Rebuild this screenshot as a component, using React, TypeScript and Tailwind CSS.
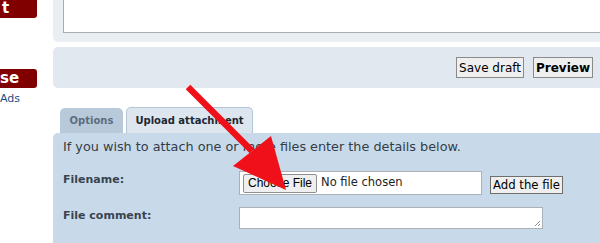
import React from "react";

const V = { fontFamily: '"DejaVu Sans", Verdana, sans-serif' };
const A = { fontFamily: '"Liberation Sans", Arial, sans-serif' };

export default function App() {
  return (
    <div className="relative w-[600px] h-[243px] overflow-hidden bg-white flex" style={V}>
      {/* sidebar */}
      <div className="w-[53px] shrink-0 flex flex-col">
        <div className="w-[37px] h-[18px] bg-[#800000] rounded-br-[3px] text-white font-bold text-[15px] leading-[16px] pl-[2px]">t</div>
        <div className="h-[51px]" />
        <div className="w-[37px] h-[19px] bg-[#800000] rounded-r-[3px] text-white font-bold text-[15px] leading-[18px]">se</div>
        <div className="text-[11px] leading-[14px] text-[#1b4e80] mt-[4px]">Ads</div>
      </div>
      {/* main */}
      <div className="flex-1 flex flex-col">
        <div className="h-[42px] bg-[#e9eef3] rounded-bl-[5px] pl-[10px]">
          <div className="h-[33px] bg-white border-l border-b border-[#a5acb2]" />
        </div>
        <div className="h-[5px]" />
        <div className="h-[41px] bg-[#e1e8f0] rounded-l-[5px] flex items-center justify-end pr-[7px] gap-[9px]">
          <button className="h-[21px] px-[2px] bg-[#efefef] border border-[#8a8a8a] text-[12px] text-black leading-[18px]" style={V}>Save draft</button>
          <button className="h-[21px] px-[2px] bg-[#efefef] border border-[#8a8a8a] text-[12px] font-bold text-black leading-[18px]" style={V}>Preview</button>
        </div>
        <div className="h-[19px]" />
        <div className="flex items-end pl-[7px] gap-[3px] h-[26px]">
          <div className="h-[25px] w-[63px] bg-[#b8cad9] rounded-t-[5px] flex items-center justify-center text-[10px] font-bold text-[#5b6e82]">Options</div>
          <div className="h-[26px] w-[127px] bg-[#dde6ef] border border-b-0 border-[#b3c6d8] rounded-t-[5px] flex items-center justify-center text-[10px] font-bold text-[#1c2833]">Upload attachment</div>
        </div>
        <div className="flex-1 bg-[#c8daea] rounded-tl-[5px] pl-[10px] pt-[6px] text-[#333d47]">
          <div className="text-[12.8px] leading-[16px]">If you wish to attach one or more files enter the details below.</div>
          <div className="flex mt-[16px]">
            <div className="w-[176px] text-[11px] font-bold text-[#39444f] pt-[1px]">Filename:</div>
            <div className="w-[243px] h-[24px] bg-white border border-[#a9b2ba] flex items-center pl-[3px]">
              <div className="h-[19px] px-[4px] bg-[#efefef] border border-[#8f8f8f] rounded-[2px] text-[12px] text-black leading-[17px]" style={A}>Choose File</div>
              <div className="ml-[4px] text-[11.5px] text-[#222]" style={V}>No file chosen</div>
            </div>
            <div className="ml-[8px] mt-[5px] h-[18px] px-[2px] bg-[#efefef] border border-[#6f6f6f] text-[11.7px] leading-[16px] text-black" style={V}>Add the file</div>
          </div>
          <div className="flex mt-[12px]">
            <div className="w-[176px] text-[11px] font-bold text-[#39444f] pt-[1px]">File comment:</div>
            <div className="relative w-[304px] h-[22px] bg-white border border-[#a9b2ba]">
              <svg className="absolute right-[1px] bottom-[1px]" width="8" height="8" viewBox="0 0 8 8">
                <path d="M7 2 L2 7 M7 5 L5 7" stroke="#8a8a8a" strokeWidth="1" />
              </svg>
            </div>
          </div>
        </div>
      </div>
      {/* red arrow */}
      <svg className="absolute left-0 top-0 pointer-events-none" width="600" height="243" viewBox="0 0 600 243">
        <line x1="188" y1="87" x2="252" y2="151" stroke="#f0101a" strokeWidth="6.5" />
        <polygon points="233,166 271,136 286,190" fill="#f0101a" />
      </svg>
    </div>
  );
}
